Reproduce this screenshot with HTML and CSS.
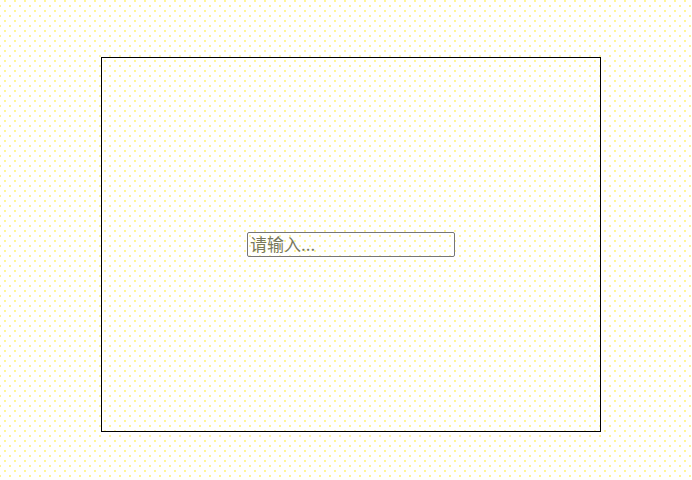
FILE: index.html
```html
<!DOCTYPE html>
<html lang="zh">
<head>
<meta charset="utf-8">
<title>输入</title>
<link rel="stylesheet" href="styles.css">
</head>
<body>
<div class="page">
  <div class="stage">
    <input class="field" type="text" placeholder="请输入...">
  </div>
</div>
</body>
</html>
```
FILE: styles.css
```css
html, body {
  margin: 0;
  padding: 0;
  width: 692px;
  height: 480px;
  overflow: hidden;
  background-color: #ffffff;
  background-image:
    radial-gradient(circle at 5px 5px, #fff27a 0.6px, rgba(255,255,255,0) 1.1px),
    radial-gradient(circle at 5px 5px, #fff27a 0.6px, rgba(255,255,255,0) 1.1px);
  background-size: 10px 10px, 10px 10px;
  background-position: 0 -4px, -5px 1px;
}
.page {
  padding: 57px 0 0 101px;
}
.stage {
  box-sizing: border-box;
  width: 500px;
  height: 375px;
  border: 1px solid #000;
  display: flex;
  align-items: center;
  justify-content: center;
}
.field {
  box-sizing: border-box;
  width: 208px;
  height: 25px;
  margin: 0;
  padding: 0 2px 2px 2px;
  border: 1px solid #767676;
  border-radius: 2px;
  background: transparent;
  font-family: "Noto Sans CJK SC", "Noto Sans", sans-serif;
  font-size: 17px;
  color: #222;
  outline: none;
}
.field::placeholder {
  color: #78785e;
  opacity: 1;
}
```
